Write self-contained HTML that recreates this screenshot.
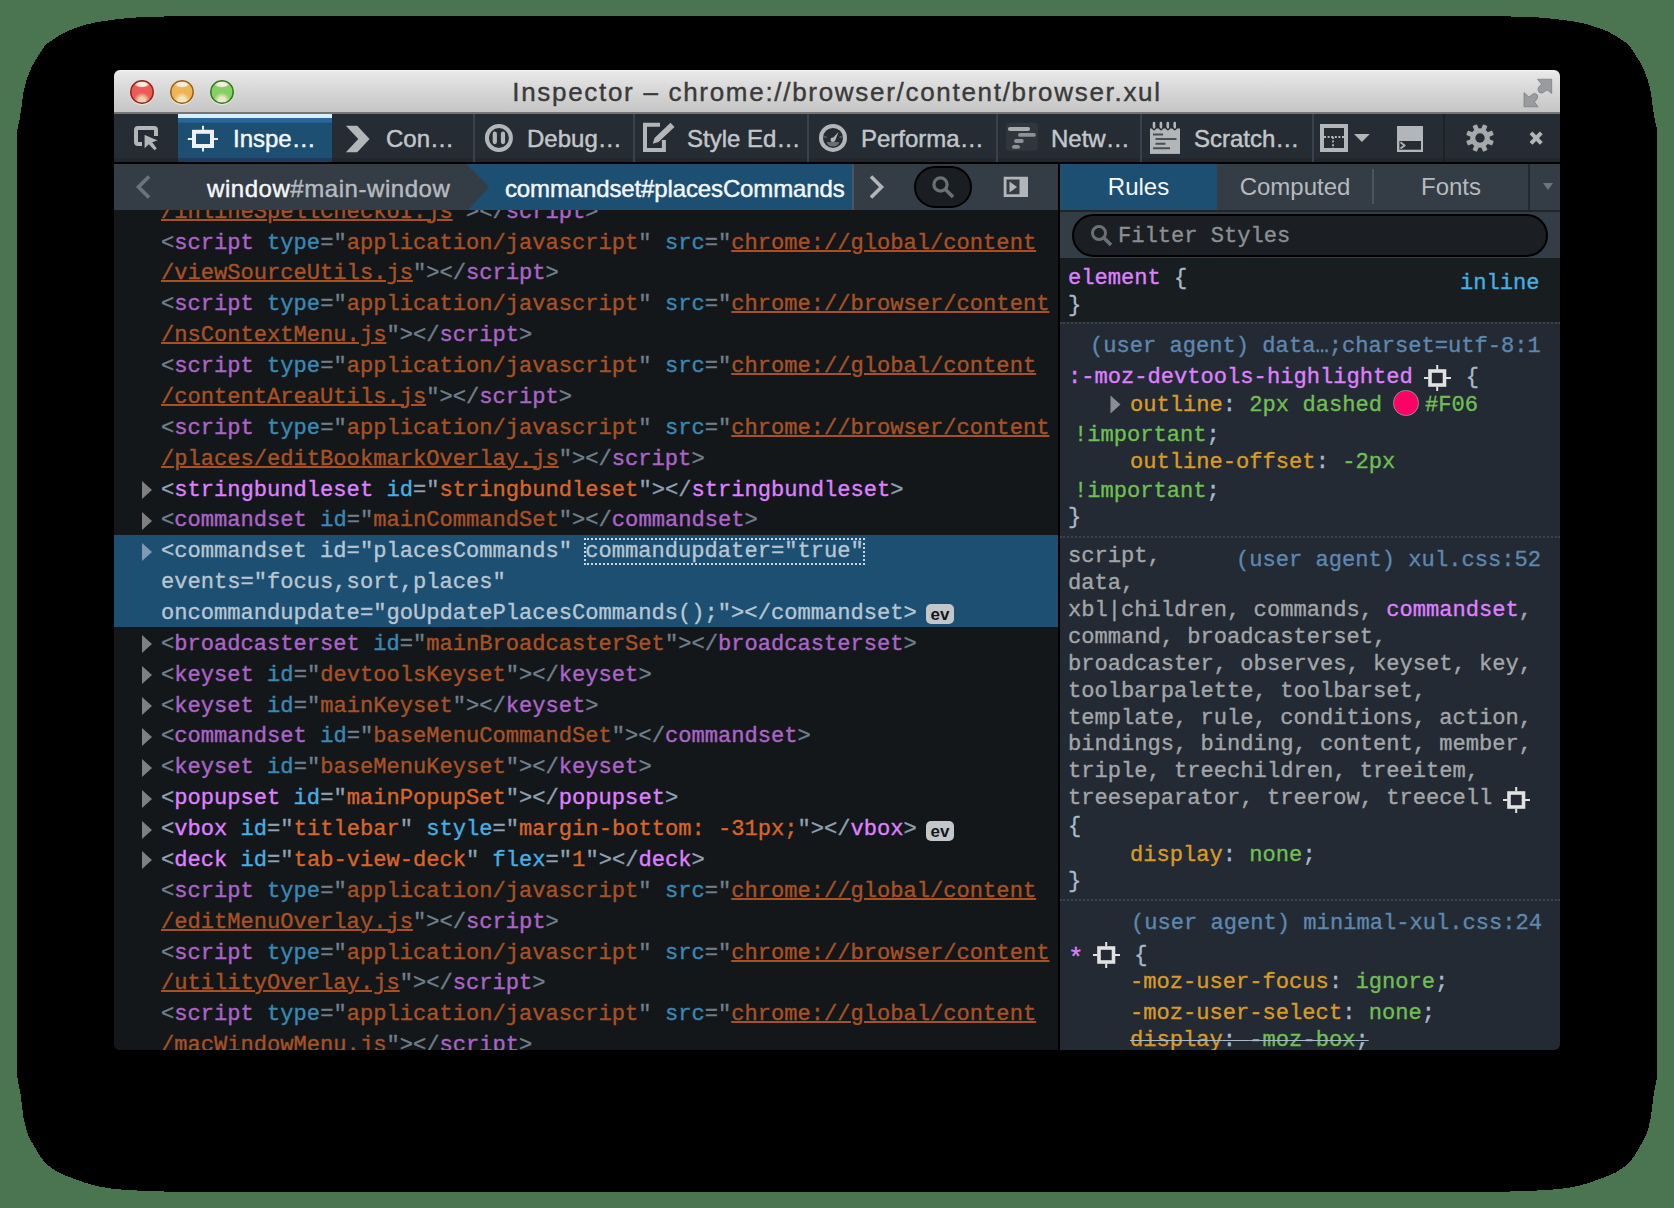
<!DOCTYPE html><html><head><meta charset="utf-8"><style>
*{margin:0;padding:0;box-sizing:border-box}
html,body{width:1674px;height:1208px;overflow:hidden;background:#4b7551}
body{position:relative;font-family:"Liberation Sans",sans-serif}
.abs{position:absolute}
svg{position:absolute;overflow:visible}
#win{position:absolute;left:114px;top:70px;width:1446px;height:980px;border-radius:6px;overflow:hidden;background:#14171a}
#title{position:absolute;left:0;top:0;width:1446px;height:44px;background:linear-gradient(#f6f6f6 0,#e8e8e8 2px,#dadada 40%,#c5c5c5 100%);border-bottom:2px solid #757575}
#title .t{position:absolute;left:0;width:1446px;top:7px;text-align:center;font-size:26px;color:#3a3a3a;letter-spacing:1.7px;-webkit-text-stroke:0.4px}
.light{position:absolute;top:10px;width:24px;height:24px;border-radius:50%}
#toolbar{position:absolute;left:0;top:44px;width:1446px;height:48px;background:linear-gradient(#252c33 0,#252c33 44px,#21272d 44px)}
#tbline{position:absolute;left:0;top:92px;width:1446px;height:2px;background:#000}
.lbl{position:absolute;top:10.5px;white-space:nowrap;color:#c3c6ca;font-size:24px;line-height:28px;-webkit-text-stroke:0.45px}
.sep{position:absolute;top:0;width:2px;height:48px;background:#39414a}
#crumbs{position:absolute;left:0;top:94px;width:944px;height:46px;background:#343c45}
#markup{position:absolute;left:0;top:140px;width:944px;height:840px;background:#14171a;overflow:hidden}
#splitter{position:absolute;left:944px;top:94px;width:2px;height:886px;background:#000}
#side{position:absolute;left:946px;top:94px;width:500px;height:886px;background:#232a33;overflow:hidden}
.mono{font-family:"Liberation Mono",monospace;font-size:22.1px;white-space:pre;-webkit-text-stroke:0.35px}
.row{position:absolute;left:47px;height:31px;line-height:31px}
.tg{color:#df80ff}.an{color:#46afe3}.av{color:#d96629}.pu{color:#8fa1b2}
.lk{text-decoration:underline;text-decoration-thickness:1.5px;text-underline-offset:1px}
.dim{opacity:.75}
.tw{position:absolute;left:28px;width:0;height:0;border-top:9px solid transparent;border-bottom:9px solid transparent;border-left:10px solid #7f7f7f}
.ev{position:absolute;height:20px;width:28px;border-radius:5px;background:#c4c7ca;color:#14171a;font-size:17px;font-weight:bold;line-height:21px;text-align:center}
.rl{position:absolute;left:8px;height:27px;line-height:27px}
.sel{color:#df80ff}.usel{color:#a3a6a9}.pn{color:#d99b28}.pv{color:#70bf53}.src{color:#5e88b0}.br{color:#a9bacb}.cl{color:#a9bacb}
.tabt{position:absolute;top:0;height:46px;line-height:46px;font-size:24px;text-align:center;color:#b6babf}
.dots{position:absolute;left:0;width:500px;height:0;border-top:2px dotted #3a4450}
</style></head><body>
<svg style="left:0;top:0" width="1674" height="1208"><path d="M1480.00,15.90 C1699.42,16.00 1501.02,16.23 1510.80,16.50 C1520.58,16.77 1529.73,16.88 1538.70,17.50 C1547.67,18.12 1556.70,19.12 1564.60,20.20 C1572.50,21.28 1578.93,22.12 1586.10,24.00 C1593.27,25.88 1601.87,29.00 1607.60,31.50 C1613.33,34.00 1616.92,36.67 1620.50,39.00 C1624.08,41.33 1626.58,42.80 1629.10,45.50 C1631.62,48.20 1633.43,51.78 1635.60,55.20 C1637.77,58.62 1640.13,62.05 1642.10,66.00 C1644.07,69.95 1645.97,74.60 1647.40,78.90 C1648.83,83.20 1649.80,87.13 1650.70,91.80 C1651.60,96.47 1652.08,102.03 1652.80,106.90 C1653.52,111.77 1654.30,116.98 1655.00,121.00 C1655.70,125.02 1656.67,126.17 1657.00,131.00 C1657.33,135.83 1657.00,-4.83 1657.00,150.00 C1657.00,304.83 1657.00,905.50 1657.00,1060.00 C1657.00,1214.50 1657.48,1071.67 1657.00,1077.00 C1656.52,1082.33 1654.97,1086.50 1654.10,1092.00 C1653.23,1097.50 1652.47,1105.17 1651.80,1110.00 C1651.13,1114.83 1651.07,1116.78 1650.10,1121.00 C1649.13,1125.22 1647.85,1130.80 1646.00,1135.30 C1644.15,1139.80 1641.70,1143.55 1639.00,1148.00 C1636.30,1152.45 1633.65,1157.93 1629.80,1162.00 C1625.95,1166.07 1621.12,1169.50 1615.90,1172.40 C1610.68,1175.30 1604.30,1177.27 1598.50,1179.40 C1592.70,1181.53 1587.08,1183.67 1581.10,1185.20 C1575.12,1186.73 1569.55,1187.73 1562.60,1188.60 C1555.65,1189.47 1548.18,1189.92 1539.40,1190.40 C1530.62,1190.88 1519.80,1191.25 1509.90,1191.50 C1500.00,1191.75 1699.27,1191.83 1480.00,1191.90 C1260.73,1191.97 413.57,1191.97 194.30,1191.90 C-24.97,1191.83 174.30,1191.75 164.40,1191.50 C154.50,1191.25 143.68,1190.88 134.90,1190.40 C126.12,1189.92 118.65,1189.47 111.70,1188.60 C104.75,1187.73 99.18,1186.73 93.20,1185.20 C87.22,1183.67 81.60,1181.53 75.80,1179.40 C70.00,1177.27 63.62,1175.30 58.40,1172.40 C53.18,1169.50 48.35,1166.07 44.50,1162.00 C40.65,1157.93 38.00,1152.45 35.30,1148.00 C32.60,1143.55 30.15,1139.80 28.30,1135.30 C26.45,1130.80 25.17,1125.22 24.20,1121.00 C23.23,1116.78 23.17,1114.83 22.50,1110.00 C21.83,1105.17 21.07,1097.50 20.20,1092.00 C19.33,1086.50 17.78,1082.33 17.30,1077.00 C16.82,1071.67 17.30,1214.50 17.30,1060.00 C17.30,905.50 17.30,304.83 17.30,150.00 C17.30,-4.83 16.97,135.83 17.30,131.00 C17.63,126.17 18.60,125.02 19.30,121.00 C20.00,116.98 20.78,111.77 21.50,106.90 C22.22,102.03 22.70,96.47 23.60,91.80 C24.50,87.13 25.47,83.20 26.90,78.90 C28.33,74.60 30.23,69.95 32.20,66.00 C34.17,62.05 36.53,58.62 38.70,55.20 C40.87,51.78 42.68,48.20 45.20,45.50 C47.72,42.80 50.22,41.33 53.80,39.00 C57.38,36.67 60.97,34.00 66.70,31.50 C72.43,29.00 81.03,25.88 88.20,24.00 C95.37,22.12 101.80,21.28 109.70,20.20 C117.60,19.12 126.63,18.12 135.60,17.50 C144.57,16.88 153.72,16.77 163.50,16.50 C173.28,16.23 -25.12,16.00 194.30,15.90 C413.72,15.80 1260.58,15.80 1480.00,15.90Z" fill="#000" shape-rendering="crispEdges"/></svg>
<div id="win">
<div id="title"><div class="t">Inspector – chrome://browser/content/browser.xul</div>
<div class="light" style="left:16px;top:10.3px;width:23.5px;height:23.5px;background:radial-gradient(ellipse 32% 14% at 50% 18%,#f6ece0 0,#f6ece0 60%,rgba(255,255,255,0) 100%),radial-gradient(circle at 50% 86%,#e6d2ae 0,#e6d2ae 14%,#ee5a55 34%);box-shadow:inset 0 0 0 1.6px #8f2c22,0 1px 1px rgba(255,255,255,.6)"></div>
<div class="light" style="left:56px;top:10.3px;width:23.5px;height:23.5px;background:radial-gradient(ellipse 32% 14% at 50% 18%,#f6ece0 0,#f6ece0 60%,rgba(255,255,255,0) 100%),radial-gradient(circle at 50% 86%,#f3e6bf 0,#f3e6bf 14%,#efb455 34%);box-shadow:inset 0 0 0 1.6px #9a6420,0 1px 1px rgba(255,255,255,.6)"></div>
<div class="light" style="left:96px;top:10.3px;width:23.5px;height:23.5px;background:radial-gradient(ellipse 32% 14% at 50% 18%,#f6ece0 0,#f6ece0 60%,rgba(255,255,255,0) 100%),radial-gradient(circle at 50% 86%,#efe6c6 0,#efe6c6 14%,#86cf62 34%);box-shadow:inset 0 0 0 1.6px #3b7a28,0 1px 1px rgba(255,255,255,.6)"></div>
</div>
<div id="toolbar">
<div class="abs" style="left:64px;top:0;width:154px;height:48px;background:linear-gradient(#d6f1fd 0,#d6f1fd 4px,#2a67a0 4px,#2a649b 8px,#1d4f73 9.5px,#1d4f73 44px,#1c3d5e 44px)"></div>
<div class="lbl" style="left:119px;color:#f5f7fa">Inspe…</div>
<div class="lbl" style="left:272px">Con…</div>
<div class="sep" style="left:359px"></div>
<div class="lbl" style="left:413px">Debug…</div>
<div class="sep" style="left:519px"></div>
<div class="lbl" style="left:573px">Style Ed…</div>
<div class="sep" style="left:693px"></div>
<div class="lbl" style="left:747px">Performa…</div>
<div class="sep" style="left:882px"></div>
<div class="lbl" style="left:937px">Netw…</div>
<div class="sep" style="left:1026px"></div>
<div class="lbl" style="left:1080px">Scratch…</div>
<div class="sep" style="left:1198px"></div>
<div class="sep" style="left:1329px;background:#1c2126"></div>
</div><div id="tbline"></div>
<div id="crumbs">
<div class="abs" style="left:352px;top:0;width:386px;height:46px;background:#1d4f73"></div>
<svg style="left:352px;top:0" width="24" height="46" viewBox="0 0 24 46"><path d="M0 0 L23 23 L2 46 L0 46 Z" fill="#343c45"/></svg>
<div class="abs" style="left:738px;top:0;width:2px;height:46px;background:#4a5560"></div>
<div class="lbl" style="left:93px;top:11px;color:#f5f7fa;letter-spacing:0.55px">window<span style="color:#b6babf">#main-window</span></div>
<div class="lbl" style="left:391px;top:11px;color:#f5f7fa;letter-spacing:-0.13px">commandset#placesCommands</div>
<div class="abs" style="left:800px;top:2px;width:58px;height:42px;border-radius:21px;background:#1a1e22;border:2px solid #000"></div>
</div>
<div id="markup">
<div class="abs" style="left:0;top:325px;width:944px;height:92px;background:#1d4f73"></div>
<div class="row mono dim" style="top:-13.30px"><span class="av lk">/inlineSpellCheckUI.js</span><span class="pu">"&gt;</span><span class="pu">&lt;/</span><span class="tg">script</span><span class="pu">&gt;</span></div>
<div class="row mono dim" style="top:17.57px"><span class="pu">&lt;</span><span class="tg">script</span> <span class="an">type</span><span class="pu">="</span><span class="av">application/javascript</span><span class="pu">"</span> <span class="an">src</span><span class="pu">="</span><span class="av lk">chrome://global/content</span></div>
<div class="row mono dim" style="top:48.44px"><span class="av lk">/viewSourceUtils.js</span><span class="pu">"&gt;</span><span class="pu">&lt;/</span><span class="tg">script</span><span class="pu">&gt;</span></div>
<div class="row mono dim" style="top:79.31px"><span class="pu">&lt;</span><span class="tg">script</span> <span class="an">type</span><span class="pu">="</span><span class="av">application/javascript</span><span class="pu">"</span> <span class="an">src</span><span class="pu">="</span><span class="av lk">chrome://browser/content</span></div>
<div class="row mono dim" style="top:110.18px"><span class="av lk">/nsContextMenu.js</span><span class="pu">"&gt;</span><span class="pu">&lt;/</span><span class="tg">script</span><span class="pu">&gt;</span></div>
<div class="row mono dim" style="top:141.05px"><span class="pu">&lt;</span><span class="tg">script</span> <span class="an">type</span><span class="pu">="</span><span class="av">application/javascript</span><span class="pu">"</span> <span class="an">src</span><span class="pu">="</span><span class="av lk">chrome://global/content</span></div>
<div class="row mono dim" style="top:171.92px"><span class="av lk">/contentAreaUtils.js</span><span class="pu">"&gt;</span><span class="pu">&lt;/</span><span class="tg">script</span><span class="pu">&gt;</span></div>
<div class="row mono dim" style="top:202.79px"><span class="pu">&lt;</span><span class="tg">script</span> <span class="an">type</span><span class="pu">="</span><span class="av">application/javascript</span><span class="pu">"</span> <span class="an">src</span><span class="pu">="</span><span class="av lk">chrome://browser/content</span></div>
<div class="row mono dim" style="top:233.66px"><span class="av lk">/places/editBookmarkOverlay.js</span><span class="pu">"&gt;</span><span class="pu">&lt;/</span><span class="tg">script</span><span class="pu">&gt;</span></div>
<div class="row mono" style="top:264.53px"><span class="pu">&lt;</span><span class="tg">stringbundleset</span> <span class="an">id</span><span class="pu">="</span><span class="av">stringbundleset</span><span class="pu">"</span><span class="pu">&gt;&lt;/</span><span class="tg">stringbundleset</span><span class="pu">&gt;</span></div>
<div class="tw" style="top:270.93px;border-left-color:#7f7f7f"></div>
<div class="row mono dim" style="top:295.40px"><span class="pu">&lt;</span><span class="tg">commandset</span> <span class="an">id</span><span class="pu">="</span><span class="av">mainCommandSet</span><span class="pu">"</span><span class="pu">&gt;&lt;/</span><span class="tg">commandset</span><span class="pu">&gt;</span></div>
<div class="tw" style="top:301.80px;border-left-color:#7f7f7f"></div>
<div class="row mono" style="top:326.27px;color:#b9c6d1">&lt;commandset id="placesCommands" <span style="outline:2px dotted #cfd8e0;outline-offset:-1px">commandupdater="true"</span></div>
<div class="tw" style="top:332.67px;border-left-color:#7e9bb3"></div>
<div class="row mono" style="top:357.14px;color:#b9c6d1">events="focus,sort,places"</div>
<div class="row mono" style="top:388.01px;color:#b9c6d1">oncommandupdate="goUpdatePlacesCommands();"&gt;&lt;/commandset&gt;</div>
<div class="row mono dim" style="top:418.88px"><span class="pu">&lt;</span><span class="tg">broadcasterset</span> <span class="an">id</span><span class="pu">="</span><span class="av">mainBroadcasterSet</span><span class="pu">"</span><span class="pu">&gt;&lt;/</span><span class="tg">broadcasterset</span><span class="pu">&gt;</span></div>
<div class="tw" style="top:425.28px;border-left-color:#7f7f7f"></div>
<div class="row mono dim" style="top:449.75px"><span class="pu">&lt;</span><span class="tg">keyset</span> <span class="an">id</span><span class="pu">="</span><span class="av">devtoolsKeyset</span><span class="pu">"</span><span class="pu">&gt;&lt;/</span><span class="tg">keyset</span><span class="pu">&gt;</span></div>
<div class="tw" style="top:456.15px;border-left-color:#7f7f7f"></div>
<div class="row mono dim" style="top:480.62px"><span class="pu">&lt;</span><span class="tg">keyset</span> <span class="an">id</span><span class="pu">="</span><span class="av">mainKeyset</span><span class="pu">"</span><span class="pu">&gt;&lt;/</span><span class="tg">keyset</span><span class="pu">&gt;</span></div>
<div class="tw" style="top:487.02px;border-left-color:#7f7f7f"></div>
<div class="row mono dim" style="top:511.49px"><span class="pu">&lt;</span><span class="tg">commandset</span> <span class="an">id</span><span class="pu">="</span><span class="av">baseMenuCommandSet</span><span class="pu">"</span><span class="pu">&gt;&lt;/</span><span class="tg">commandset</span><span class="pu">&gt;</span></div>
<div class="tw" style="top:517.89px;border-left-color:#7f7f7f"></div>
<div class="row mono dim" style="top:542.36px"><span class="pu">&lt;</span><span class="tg">keyset</span> <span class="an">id</span><span class="pu">="</span><span class="av">baseMenuKeyset</span><span class="pu">"</span><span class="pu">&gt;&lt;/</span><span class="tg">keyset</span><span class="pu">&gt;</span></div>
<div class="tw" style="top:548.76px;border-left-color:#7f7f7f"></div>
<div class="row mono" style="top:573.23px"><span class="pu">&lt;</span><span class="tg">popupset</span> <span class="an">id</span><span class="pu">="</span><span class="av">mainPopupSet</span><span class="pu">"</span><span class="pu">&gt;&lt;/</span><span class="tg">popupset</span><span class="pu">&gt;</span></div>
<div class="tw" style="top:579.63px;border-left-color:#7f7f7f"></div>
<div class="row mono" style="top:604.10px"><span class="pu">&lt;</span><span class="tg">vbox</span> <span class="an">id</span><span class="pu">="</span><span class="av">titlebar</span><span class="pu">"</span> <span class="an">style</span><span class="pu">="</span><span class="av">margin-bottom: -31px;</span><span class="pu">"</span><span class="pu">&gt;&lt;/</span><span class="tg">vbox</span><span class="pu">&gt;</span></div>
<div class="tw" style="top:610.50px;border-left-color:#7f7f7f"></div>
<div class="row mono" style="top:634.97px"><span class="pu">&lt;</span><span class="tg">deck</span> <span class="an">id</span><span class="pu">="</span><span class="av">tab-view-deck</span><span class="pu">"</span> <span class="an">flex</span><span class="pu">="</span><span class="av">1</span><span class="pu">"</span><span class="pu">&gt;&lt;/</span><span class="tg">deck</span><span class="pu">&gt;</span></div>
<div class="tw" style="top:641.37px;border-left-color:#7f7f7f"></div>
<div class="row mono dim" style="top:665.84px"><span class="pu">&lt;</span><span class="tg">script</span> <span class="an">type</span><span class="pu">="</span><span class="av">application/javascript</span><span class="pu">"</span> <span class="an">src</span><span class="pu">="</span><span class="av lk">chrome://global/content</span></div>
<div class="row mono dim" style="top:696.71px"><span class="av lk">/editMenuOverlay.js</span><span class="pu">"&gt;</span><span class="pu">&lt;/</span><span class="tg">script</span><span class="pu">&gt;</span></div>
<div class="row mono dim" style="top:727.58px"><span class="pu">&lt;</span><span class="tg">script</span> <span class="an">type</span><span class="pu">="</span><span class="av">application/javascript</span><span class="pu">"</span> <span class="an">src</span><span class="pu">="</span><span class="av lk">chrome://browser/content</span></div>
<div class="row mono dim" style="top:758.45px"><span class="av lk">/utilityOverlay.js</span><span class="pu">"&gt;</span><span class="pu">&lt;/</span><span class="tg">script</span><span class="pu">&gt;</span></div>
<div class="row mono dim" style="top:789.32px"><span class="pu">&lt;</span><span class="tg">script</span> <span class="an">type</span><span class="pu">="</span><span class="av">application/javascript</span><span class="pu">"</span> <span class="an">src</span><span class="pu">="</span><span class="av lk">chrome://global/content</span></div>
<div class="row mono dim" style="top:820.19px"><span class="av lk">/macWindowMenu.js</span><span class="pu">"&gt;</span><span class="pu">&lt;/</span><span class="tg">script</span><span class="pu">&gt;</span></div>
<div class="ev" style="left:812px;top:394.41px">ev</div>
<div class="ev" style="left:812px;top:610.50px">ev</div>
</div>
<div id="splitter"></div>
<div id="side">
<div class="abs" style="left:0;top:0;width:500px;height:46px;background:#343c45"></div>
<div class="abs" style="left:0;top:0;width:157px;height:46px;background:#1d4f73"></div>
<div class="tabt" style="left:0;width:157px;color:#f5f7fa">Rules</div>
<div class="tabt" style="left:157px;width:156px">Computed</div>
<div class="abs" style="left:312px;top:5px;width:2px;height:35px;background:#4c555e"></div>
<div class="tabt" style="left:313px;width:156px">Fonts</div>
<div class="abs" style="left:468px;top:0;width:2px;height:46px;background:#222930"></div>
<svg style="left:482px;top:18px" width="12" height="10" viewBox="0 0 12 10"><path d="M1 1 H11 L6 8 Z" fill="#6d747c"/></svg>
<div class="abs" style="left:0;top:46px;width:500px;height:48px;background:#343c45;border-top:2px solid #1f252b"></div>
<div class="abs" style="left:12px;top:50px;width:476px;height:43px;border-radius:22px;background:#1b1f23;border:2px solid #000"></div>
<svg style="left:30px;top:60px" width="23" height="23" viewBox="0 0 23 23"><circle cx="9" cy="9" r="6.5" fill="none" stroke="#6b7075" stroke-width="3"/><path d="M13.5 13.5 L21 21" stroke="#6b7075" stroke-width="3.5"/></svg>
<div class="abs mono" style="left:58px;top:59px;line-height:27px;color:#8b8f93">Filter Styles</div>
<div class="abs" style="left:0;top:94px;width:500px;height:64px;background:#181d20"></div>
<div class="rl mono" style="top:100.90px;left:8px;"><span class="sel">element</span><span class="br"> {</span></div>
<div class="rl mono" style="top:128.10px;left:8px;"><span class="br">}</span></div>
<div class="rl mono" style="top:105.50px;left:400px;"><span class="an">inline</span></div>
<div class="dots" style="top:158px"></div>
<div class="rl mono" style="top:168.50px;left:30px;"><span class="src">(user agent) data…;charset=utf-8:1</span></div>
<div class="rl mono" style="top:199.90px;left:8px;"><span class="sel">:-moz-devtools-highlighted</span>    <span class="br">{</span></div>
<div class="rl mono" style="top:227.90px;left:70px;"><span class="pn">outline</span><span class="cl">: </span><span class="pv">2px dashed</span></div>
<div class="rl mono" style="top:227.90px;left:365px;"><span class="pv">#F06</span></div>
<div class="rl mono" style="top:257.80px;left:14px;"><span class="pv">!important</span><span class="cl">;</span></div>
<div class="rl mono" style="top:285.10px;left:70px;"><span class="pn">outline-offset</span><span class="cl">: </span><span class="pv">-2px</span></div>
<div class="rl mono" style="top:314.10px;left:14px;"><span class="pv">!important</span><span class="cl">;</span></div>
<div class="rl mono" style="top:340.10px;left:8px;"><span class="br">}</span></div>
<div class="dots" style="top:372px"></div>
<div class="rl mono" style="top:383.10px;left:176px;"><span class="src">(user agent) xul.css:52</span></div>
<div class="rl mono" style="top:379.30px;left:8px;"><span class="usel">script,</span></div>
<div class="rl mono" style="top:406.17px;left:8px;"><span class="usel">data,</span></div>
<div class="rl mono" style="top:433.04px;left:8px;"><span class="usel">xbl|children, commands, </span><span class="sel">commandset</span><span class="usel">,</span></div>
<div class="rl mono" style="top:459.91px;left:8px;"><span class="usel">command, broadcasterset,</span></div>
<div class="rl mono" style="top:486.78px;left:8px;"><span class="usel">broadcaster, observes, keyset, key,</span></div>
<div class="rl mono" style="top:513.65px;left:8px;"><span class="usel">toolbarpalette, toolbarset,</span></div>
<div class="rl mono" style="top:540.52px;left:8px;"><span class="usel">template, rule, conditions, action,</span></div>
<div class="rl mono" style="top:567.39px;left:8px;"><span class="usel">bindings, binding, content, member,</span></div>
<div class="rl mono" style="top:594.26px;left:8px;"><span class="usel">triple, treechildren, treeitem,</span></div>
<div class="rl mono" style="top:621.13px;left:8px;"><span class="usel">treeseparator, treerow, treecell</span></div>
<div class="rl mono" style="top:648.80px;left:8px;"><span class="br">{</span></div>
<div class="rl mono" style="top:677.90px;left:70px;"><span class="pn">display</span><span class="cl">: </span><span class="pv">none</span><span class="cl">;</span></div>
<div class="rl mono" style="top:703.90px;left:8px;"><span class="br">}</span></div>
<div class="dots" style="top:735px"></div>
<div class="rl mono" style="top:745.90px;left:71px;"><span class="src">(user agent) minimal-xul.css:24</span></div>
<div class="rl mono" style="top:777.80px;left:8px;"><span class="sel" style="position:relative;top:5px;font-size:26px;display:inline-block;width:13.26px;line-height:20px">*</span>    <span class="br">{</span></div>
<div class="rl mono" style="top:805.30px;left:70px;"><span class="pn">-moz-user-focus</span><span class="cl">: </span><span class="pv">ignore</span><span class="cl">;</span></div>
<div class="rl mono" style="top:835.70px;left:70px;"><span class="pn">-moz-user-select</span><span class="cl">: </span><span class="pv">none</span><span class="cl">;</span></div>
<div class="rl mono" style="top:863.10px;left:70px;"><span style="text-decoration:line-through;text-decoration-color:#a9bacb;text-decoration-thickness:1.2px"><span class="pn">display</span><span class="cl">: </span><span class="pv">-moz-box</span><span class="cl">;</span></span></div>
<svg style="left:363.5px;top:200.5px" width="27" height="26" viewBox="0 0 27 26"><rect x="6" y="6" width="14.5" height="14" fill="none" stroke="#e2e2e2" stroke-width="3.6"/><path d="M13.2 0 V4.5 M13.2 21.5 V26 M0 13 H4.5 M22 13 H27" stroke="#e2e2e2" stroke-width="2"/></svg>
<svg style="left:443.2px;top:622.5px" width="27" height="26" viewBox="0 0 27 26"><rect x="6" y="6" width="14.5" height="14" fill="none" stroke="#e2e2e2" stroke-width="3.6"/><path d="M13.2 0 V4.5 M13.2 21.5 V26 M0 13 H4.5 M22 13 H27" stroke="#e2e2e2" stroke-width="2"/></svg>
<svg style="left:33.0px;top:778.0px" width="27" height="26" viewBox="0 0 27 26"><rect x="6" y="6" width="14.5" height="14" fill="none" stroke="#e2e2e2" stroke-width="3.6"/><path d="M13.2 0 V4.5 M13.2 21.5 V26 M0 13 H4.5 M22 13 H27" stroke="#e2e2e2" stroke-width="2"/></svg>
<svg style="left:50px;top:231px" width="11" height="19" viewBox="0 0 11 19"><path d="M0.5 0.5 L10.5 9.5 L0.5 18.5 Z" fill="#8a8f94"/></svg>
<div class="abs" style="left:333px;top:226px;width:25.5px;height:25.5px;border-radius:50%;background:#ff0066;border:1.5px solid #8a8f94"></div>
</div>
</div>
<svg style="left:0;top:0" width="1674" height="1208"><path d="M1537.5 79.2 H1551.7 V93.5 L1547.2 90 L1543.2 92.6 Q1540.5 94 1538.6 91.8 Q1537 89.5 1538.9 86.8 L1541.4 84.2 Z" fill="#999b9e" stroke="#6e7073" stroke-width="0.6"/><path d="M1524 92.5 L1529 97 L1532.5 94.2 Q1535.2 92.5 1537 94.6 Q1538.6 96.7 1536.8 99.2 L1534.4 102 L1538.1 106.8 H1524 Z" fill="#999b9e" stroke="#6e7073" stroke-width="0.6"/><path d="M142 144 H138 Q136 144 136 142 V130 Q136 128 138 128 H154 Q156 128 156 130 V136" fill="none" stroke="#b3b6b9" stroke-width="4"/><path d="M144 133.9 L159.1 140.5 L153.2 142.5 L157.5 148.5 L154.5 151.1 L148.8 145.2 L144 149.8 Z" fill="#b3b6b9" stroke="#252c33" stroke-width="1.2"/><rect x="194" y="131.8" width="18" height="14.2" fill="none" stroke="#eef0f2" stroke-width="4"/><path d="M203 125.8 V129.8 M203 148 V151.6 M187.8 138.9 H192 M214 138.9 H218" stroke="#eef0f2" stroke-width="2"/><path d="M345.9 125.7 L357.2 125.7 L369.6 138.9 L357.2 152.2 L345.9 152.2 L358.3 138.9 Z" fill="#b3b6b9"/><circle cx="498.9" cy="138" r="12" fill="none" stroke="#b3b6b9" stroke-width="4"/><path d="M494.8 133.7 V142.1 M503 133.7 V142.1" stroke="#b3b6b9" stroke-width="4.2" stroke-linecap="round"/><path d="M660 124.8 H645 V150 H663.9 V140" fill="none" stroke="#b3b6b9" stroke-width="4"/><path d="M670.5 122.8 L674.5 127 L658.5 142 L652.8 143.8 L654.5 138 Z" fill="#b3b6b9"/><circle cx="833" cy="137.9" r="12" fill="none" stroke="#b3b6b9" stroke-width="4"/><path d="M826.6 142 H839.4 Q838 146.5 833 146.5 Q828 146.5 826.6 142 Z" fill="#6a6f74"/><path d="M831 140 L838.5 132 L835 141 Z" fill="#b3b6b9"/><circle cx="832.8" cy="139.7" r="2.3" fill="#b3b6b9"/><path d="M823.5 137 H826.5 M839.5 137 H842.5" stroke="#5e6368" stroke-width="1.5"/><rect x="1006" y="122.8" width="31.8" height="28" rx="3.5" fill="#30363e"/><path d="M1009.9 129 H1028.1" stroke="#a8abae" stroke-width="3.9" stroke-linecap="round"/><path d="M1020 134.9 H1033.9 M1016 141 H1021.8 M1014 146.9 H1018" stroke="#8d9195" stroke-width="3.9" stroke-linecap="round"/><path d="M1150 128.5 H1180 V153.9 H1150 Z" fill="#b3b6b9"/><path d="M1154.0 123 V129" stroke="#b3b6b9" stroke-width="2.6" stroke-linecap="round"/><path d="M1152.2 127.5 Q1154.0 131.5 1155.8 128" fill="none" stroke="#252c33" stroke-width="1.6"/><path d="M1160.9 123 V129" stroke="#b3b6b9" stroke-width="2.6" stroke-linecap="round"/><path d="M1159.1 127.5 Q1160.9 131.5 1162.7 128" fill="none" stroke="#252c33" stroke-width="1.6"/><path d="M1167.8 123 V129" stroke="#b3b6b9" stroke-width="2.6" stroke-linecap="round"/><path d="M1166.0 127.5 Q1167.8 131.5 1169.6 128" fill="none" stroke="#252c33" stroke-width="1.6"/><path d="M1174.7 123 V129" stroke="#b3b6b9" stroke-width="2.6" stroke-linecap="round"/><path d="M1172.9 127.5 Q1174.7 131.5 1176.5 128" fill="none" stroke="#252c33" stroke-width="1.6"/><path d="M1153 134.4 H1163 M1155.5 139 H1176.5 M1155.5 143.7 H1165.5 M1153 148.2 H1170" stroke="#4a4f55" stroke-width="2"/><rect x="1322" y="126" width="24" height="24" fill="none" stroke="#b3b6b9" stroke-width="4"/><path d="M1324 137 H1344 M1333 137 V148" stroke="#b3b6b9" stroke-width="1.8" stroke-dasharray="2 1.6"/><path d="M1354 133.9 H1369.8 L1361.9 142 Z" fill="#b3b6b9"/><rect x="1397" y="126" width="26" height="26" fill="#b3b6b9"/><rect x="1399.4" y="141" width="21.6" height="8.7" fill="#252c33"/><path d="M1400.5 142.3 L1404.5 145.4 L1400.5 148.5" fill="none" stroke="#b3b6b9" stroke-width="1.8"/><g fill="#a6a9ac"><rect x="1477.6" y="124" width="4.8" height="7" rx="0.9" transform="rotate(22.5 1480 138)"/><rect x="1477.6" y="124" width="4.8" height="7" rx="0.9" transform="rotate(67.5 1480 138)"/><rect x="1477.6" y="124" width="4.8" height="7" rx="0.9" transform="rotate(112.5 1480 138)"/><rect x="1477.6" y="124" width="4.8" height="7" rx="0.9" transform="rotate(157.5 1480 138)"/><rect x="1477.6" y="124" width="4.8" height="7" rx="0.9" transform="rotate(202.5 1480 138)"/><rect x="1477.6" y="124" width="4.8" height="7" rx="0.9" transform="rotate(247.5 1480 138)"/><rect x="1477.6" y="124" width="4.8" height="7" rx="0.9" transform="rotate(292.5 1480 138)"/><rect x="1477.6" y="124" width="4.8" height="7" rx="0.9" transform="rotate(337.5 1480 138)"/><circle cx="1480" cy="138" r="9.8"/></g><circle cx="1480" cy="138" r="4.7" fill="#252c33"/><path d="M1531 132.8 L1541.3 143.3 M1541.3 132.8 L1531 143.3" stroke="#b3b6b9" stroke-width="4"/><path d="M149 176.5 L138.5 187 L149 197.5" fill="none" stroke="#6b737b" stroke-width="3.6"/><path d="M871 176.5 L881.5 187 L871 197.5" fill="none" stroke="#b3b6b9" stroke-width="3.6"/><circle cx="940.5" cy="184.5" r="6.6" fill="none" stroke="#6b7075" stroke-width="3.2"/><path d="M945.5 189.5 L953 197" stroke="#6b7075" stroke-width="3.6"/><path d="M1003.7 176.7 H1028 V197 H1003.7 Z M1006.5 179.5 V194.2 H1019.5 V179.5 Z" fill="#b3b6b9" fill-rule="evenodd"/><path d="M1009.5 181.5 L1017 187 L1009.5 192.5 Z" fill="#b3b6b9"/></svg>
</body></html>
